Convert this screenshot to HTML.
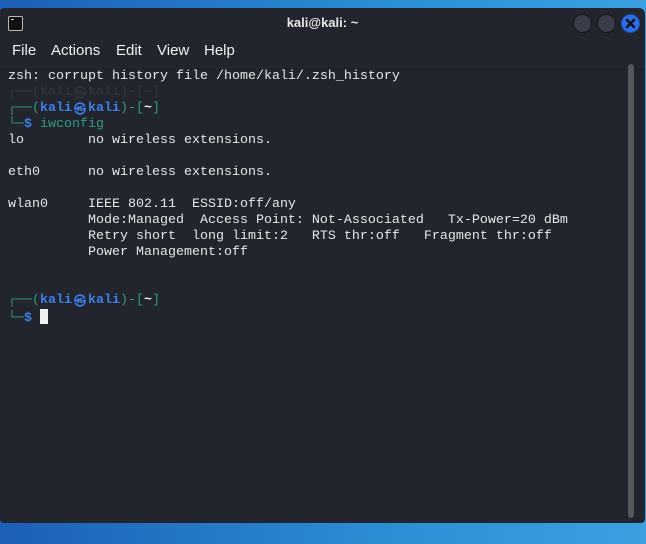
<!DOCTYPE html>
<html><head><meta charset="utf-8"><style>
html,body{margin:0;padding:0;width:646px;height:544px;overflow:hidden;background:linear-gradient(90deg,#1c5fb8,#2c8fd6 60%,#3aa0e0);font-family:"Liberation Sans",sans-serif}
.win{position:absolute;left:0;top:8px;width:645px;height:515px;background:#23252e;border-radius:4px 6px 4px 4px;overflow:hidden}
.title{position:absolute;top:0;left:0;right:0;height:30px;color:#e8e8e8;font-size:13px;text-align:center;line-height:30px;font-weight:bold}
.ticon{position:absolute;left:8px;top:8px;width:13px;height:13px;border:1px solid #bbb;border-radius:2px;background:#111}
.ticon:after{content:"";position:absolute;left:2px;top:2px;width:3px;height:1px;background:#ccc}
.btn{position:absolute;top:6px;width:17px;height:17px;border-radius:50%;background:#3a3d4a;border:1px solid #15161b}
.menu{position:absolute;top:30px;left:0;right:0;height:31px;border-bottom:1px solid #1d1f26;color:#f0f0f0;font-size:15px}
.menu span{position:absolute;top:4px}
.term{position:absolute;left:8px;top:61px;font-family:"Liberation Mono",monospace;font-size:13.33px;line-height:16px;color:#e6e6e6;white-space:pre}
.g{color:#2f9c7f}.b{color:#3d7ee8;font-weight:bold}.f{color:#33363f}
.s{display:inline-block;width:16px;text-align:center;font-family:"DejaVu Sans",sans-serif;font-size:12px;overflow:hidden;vertical-align:top}
.sb{position:absolute;left:628px;top:56px;width:6px;height:454px;background:#55575d;border-radius:3px}
.cur{display:inline-block;width:8px;height:15px;background:#f0f0f0;vertical-align:-3px}
</style></head><body>
<div class="win">
<div class="title"><div class="ticon"></div>kali@kali: ~</div>
<div class="btn" style="left:573px"></div>
<div class="btn" style="left:597px"></div>
<div class="btn" style="left:621px;background:#2a6ee8;border-color:#1a4fb0"><svg width="17" height="17" viewBox="0 0 17 17"><path d="M5 5L12 12M12 5L5 12" stroke="#111" stroke-width="2.5" stroke-linecap="round"/></svg></div>
<div class="menu"><span style="left:12px">File</span><span style="left:51px">Actions</span><span style="left:116px">Edit</span><span style="left:157px">View</span><span style="left:204px">Help</span></div>
<div class="sb"></div>
<div class="term">zsh: corrupt history file /home/kali/.zsh_history
<span class="f">┌──(kali<span class="s">㉿</span>kali)-[~]</span>
<span class="g">┌──(</span><span class="b">kali<span class="s">㉿</span>kali</span><span class="g">)-[</span><b>~</b><span class="g">]</span>
<span class="g">└─</span><span class="b">$</span> <span class="g">iwconfig</span>
lo        no wireless extensions.

eth0      no wireless extensions.

wlan0     IEEE 802.11  ESSID:off/any  
          Mode:Managed  Access Point: Not-Associated   Tx-Power=20 dBm   
          Retry short  long limit:2   RTS thr:off   Fragment thr:off
          Power Management:off


<span class="g">┌──(</span><span class="b">kali<span class="s">㉿</span>kali</span><span class="g">)-[</span><b>~</b><span class="g">]</span>
<span class="g">└─</span><span class="b">$</span> <span class="cur"></span></div>
</div>
</body></html>
